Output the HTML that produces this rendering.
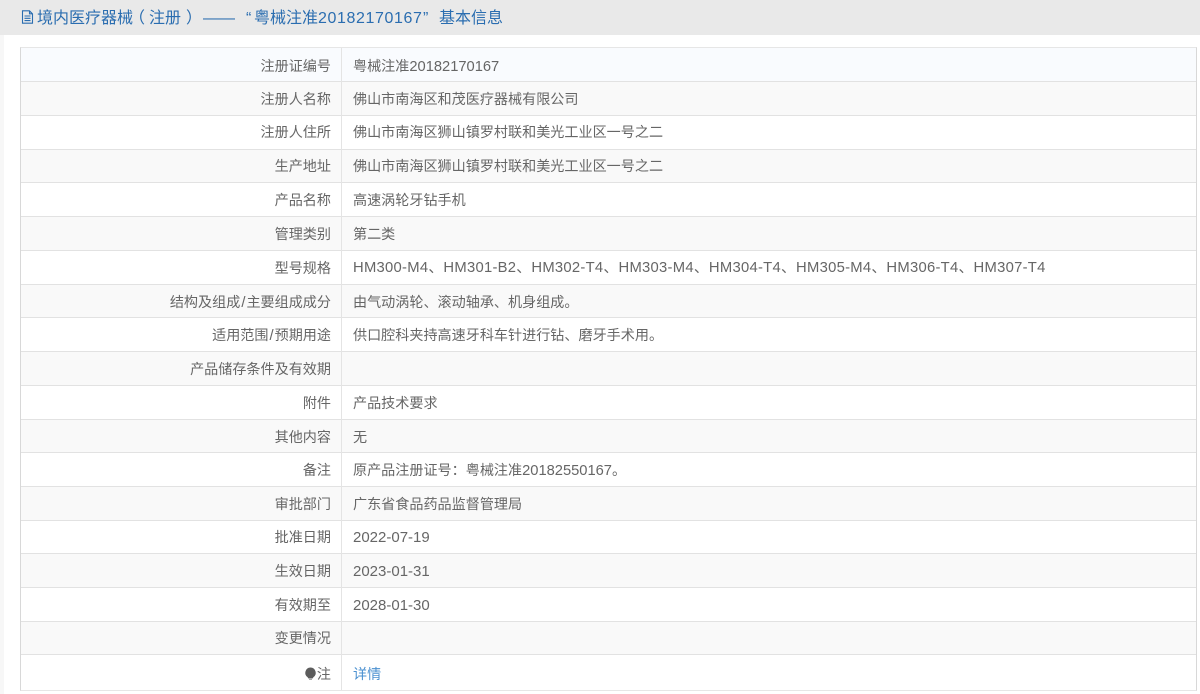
<!DOCTYPE html>
<html lang="zh"><head><meta charset="utf-8">
<style>
html,body{margin:0;padding:0;width:1200px;height:694px;overflow:hidden;background:#fff}
body{position:relative;font-family:"Liberation Sans","Noto Sans CJK SC",sans-serif;font-size:14.1px;color:#666}
#strip{position:absolute;left:0;top:0;width:4px;height:694px;background:#f7f7f7}
#head{position:absolute;left:0;top:0;width:1200px;height:35px;background:#e9e9e9}
.t{position:absolute;top:9px;font-size:16px;line-height:20px;color:#2a6db0;white-space:nowrap}
#icon{position:absolute;left:21px;top:10px}
#tb{position:absolute;left:20px;top:47px;width:1177px;height:644px;border:1px solid #e6e6e6;box-sizing:border-box;border-left-color:#d8d8d8;border-right-color:#d8d8d8;overflow:hidden}
.r{position:absolute;left:0;width:1175px;box-sizing:border-box;border-bottom:1px solid #e2e2e2;height:34px}
.s{height:33px}
.l{position:absolute;left:0;top:0;width:310px;text-align:right;line-height:35px;white-space:nowrap}
.v{position:absolute;left:332px;top:0;line-height:35px;white-space:nowrap}
.up .l,.up .v{line-height:33px}
.dn .l,.dn .v{line-height:37px}
.n{font-size:14.7px}
.d{font-size:15px}
.x{font-size:14.8px;margin:0 1px}
.a{background:#f9f9f9}
.w{background:#fff}
.f{background:#f9fbfe}
#sep{position:absolute;left:341px;top:48px;width:1px;height:642px;background:#e4e4e4}
</style></head><body>
<div id="strip"></div>
<div id="head"></div>
<svg id="icon" width="13" height="14" viewBox="0 0 13 14" fill="none" stroke="#2a6db0" stroke-width="1.1"><path d="M1.500 .8h7l3 3v9.400h-10zM8.500 .8v3h3M3.500 6h6M3.500 8.300h6M3.500 10.600h6"/></svg>
<div class="t" style="left:37px">境内医疗器械</div>
<div class="t" style="left:129px">（</div>
<div class="t" style="left:149px">注册</div>
<div class="t" style="left:186px">）</div>
<div class="t" style="left:203px;letter-spacing:0">——</div>
<div class="t" style="left:246px">“</div>
<div class="t" style="left:254px">粤械注准</div>
<div class="t" style="left:318px;letter-spacing:.6px">20182170167</div>
<div class="t" style="left:423px">”</div>
<div class="t" style="left:439px">基本信息</div>
<div id="tb">
<div class="r f dn" style="top:0"><div class="l">注册证编号</div><div class="v">粤械注准<span class="n">20182170167</span></div></div>
<div class="r a" style="top:34px"><div class="l">注册人名称</div><div class="v">佛山市南海区和茂医疗器械有限公司</div></div>
<div class="r w up" style="top:68px"><div class="l">注册人住所</div><div class="v">佛山市南海区狮山镇罗村联和美光工业区一号之二</div></div>
<div class="r a s up" style="top:102px"><div class="l">生产地址</div><div class="v">佛山市南海区狮山镇罗村联和美光工业区一号之二</div></div>
<div class="r w" style="top:135px"><div class="l">产品名称</div><div class="v">高速涡轮牙钻手机</div></div>
<div class="r a" style="top:169px"><div class="l">管理类别</div><div class="v">第二类</div></div>
<div class="r w" style="top:203px"><div class="l">型号规格</div><div class="v" style="font-size:14.8px;letter-spacing:.27px">HM300-M4、HM301-B2、HM302-T4、HM303-M4、HM304-T4、HM305-M4、HM306-T4、HM307-T4</div></div>
<div class="r a s" style="top:237px"><div class="l">结构及组成<span class="x">/</span>主要组成成分</div><div class="v">由气动涡轮、滚动轴承、机身组成。</div></div>
<div class="r w" style="top:270px"><div class="l">适用范围<span class="x">/</span>预期用途</div><div class="v">供口腔科夹持高速牙科车针进行钻、磨牙手术用。</div></div>
<div class="r a" style="top:304px"><div class="l">产品储存条件及有效期</div><div class="v"></div></div>
<div class="r w" style="top:338px"><div class="l">附件</div><div class="v">产品技术要求</div></div>
<div class="r a s" style="top:372px"><div class="l">其他内容</div><div class="v">无</div></div>
<div class="r w" style="top:405px"><div class="l">备注</div><div class="v">原产品注册证号：粤械注准<span class="n">20182550167</span>。</div></div>
<div class="r a" style="top:439px"><div class="l">审批部门</div><div class="v">广东省食品药品监督管理局</div></div>
<div class="r w s up" style="top:473px"><div class="l">批准日期</div><div class="v d">2022-07-19</div></div>
<div class="r a" style="top:506px"><div class="l">生效日期</div><div class="v d">2023-01-31</div></div>
<div class="r w" style="top:540px"><div class="l">有效期至</div><div class="v d">2028-01-30</div></div>
<div class="r a s up" style="top:574px"><div class="l">变更情况</div><div class="v"></div></div>
<div class="r w" style="top:607px;height:35px;border-bottom:0"><div class="l" style="line-height:38px"><svg width="13" height="13" viewBox="0 0 13 13" style="vertical-align:-1px"><path d="M6.500 .5a5.300 5.300 0 0 1 3 9.600L8.500 11.500H4.500L3.500 10.100A5.300 5.300 0 0 1 6.500 .5z" fill="#5c5c5c"/><path d="M5 12.500h3" stroke="#aaa"/></svg>注</div><div class="v" style="color:#4a90d0;line-height:38px">详情</div></div>
</div>
<div id="sep"></div>
</body></html>
